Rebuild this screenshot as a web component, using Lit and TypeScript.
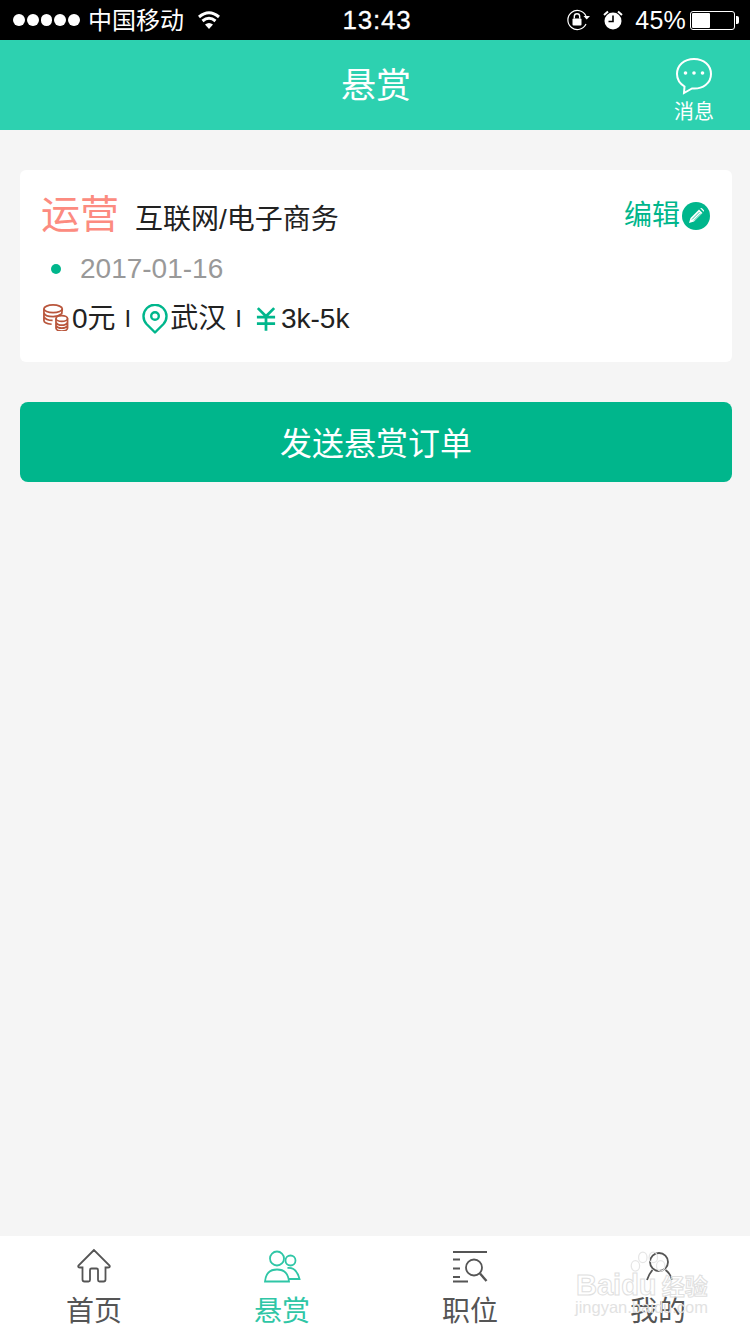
import { LitElement, css, html, svg } from "lit";
import { customElement } from "lit/decorators.js";

const tabs = [
  {
    label: "首页",
    icon: svg`<g transform="translate(1 0.500)"><path d="M18 1.500 L2.500 17 Q1.500 19 4 19 L6.500 19 L6.500 31 Q6.500 33 8.500 33 L12.500 33 Q14 33 14 31.500 L14 21.500 Q14 20 15.500 20 L20.500 20 Q22 20 22 21.500 L22 31.500 Q22 33 23.500 33 L27.500 33 Q29.500 33 29.500 31 L29.500 19 L32 19 Q34.500 19 33.500 17 Z"/></g>`,
  },
  {
    label: "悬赏",
    active: true,
    icon: svg`<circle cx="14" cy="10.500" r="7"/><path d="M2 33.500 Q3 21.500 14 21.500 Q25 21.500 26 33.500 Z"/><circle cx="27.500" cy="12.500" r="5"/><path d="M24.500 20 Q33.500 19 36.500 31 L26 31"/>`,
  },
  {
    label: "职位",
    icon: svg`<g transform="translate(0 1)"><path d="M2 3 H36 M2 10.500 H9 M2 19.500 H9 M2 28 H9 M2 32.500 H17"/><circle cx="23" cy="18.500" r="8"/><path d="M29 24.500 L35.500 32" stroke-width="2.400"/></g>`,
  },
  {
    label: "我的",
    icon: svg`<circle cx="20" cy="14" r="9"/><path d="M13.500 22 Q10 26 8 32 M26.500 22 Q31 25 33 32"/>`,
  },
];

@customElement("app-root")
export class AppRoot extends LitElement {
  static styles = css`
    :host {
      display: block;
      width: 750px;
      height: 1334px;
      background: #f5f5f5;
      font-family: "Liberation Sans", "Noto Sans CJK SC", sans-serif;
      position: relative;
      overflow: hidden;
    }
    .page {
      height: 1334px;
      display: flex;
      flex-direction: column;
    }
    .status {
      height: 40px;
      background: #000;
      color: #fff;
      display: flex;
      align-items: center;
      padding: 0 11px 0 13px;
      position: relative;
    }
    .dots {
      display: flex;
      gap: 2px;
      margin-right: 8px;
    }
    .dots i {
      width: 11.800px;
      height: 11.800px;
      border-radius: 50%;
      background: #fff;
    }
    .carrier {
      margin-right: 12px;
      font-size: 24px;
      line-height: 24px;
      margin-top: 1px;
    }
    .time {
      position: absolute;
      left: 4px;
      right: 0;
      text-align: center;
      font-size: 26px;
      letter-spacing: 0.8px;
      -webkit-text-stroke: 0.3px #fff;
    }
    .status-right {
      margin-left: auto;
      display: flex;
      align-items: center;
    }
    .pct {
      font-size: 25px;
      letter-spacing: 0.2px;
      margin: 0 4px 0 12px;
    }
    .battery {
      width: 41px;
      height: 15px;
      border: 1px solid #fff;
      border-radius: 3px;
      padding: 1px;
      display: flex;
      box-sizing: content-box;
    }
    .battery b {
      width: 18px;
      background: #fff;
      border-radius: 1px;
    }
    .nub {
      width: 3px;
      height: 8px;
      background: #fff;
      border-radius: 0 2px 2px 0;
      margin-left: 1px;
    }
    .header {
      height: 90px;
      background: #2dd1b0;
      color: #fff;
      display: flex;
      align-items: center;
      justify-content: center;
      position: relative;
    }
    .title {
      font-size: 35px;
      line-height: 1;
      margin-left: 2px;
    }
    .msg {
      position: absolute;
      right: 36px;
      top: 17px;
      display: flex;
      flex-direction: column;
      align-items: center;
      font-size: 20px;
      line-height: 20px;
      gap: 7px;
    }
    .content {
      flex: 1;
      padding: 40px 18px 0 20px;
      display: flex;
      flex-direction: column;
      gap: 40px;
    }
    .card {
      height: 192px;
      box-sizing: border-box;
      background: #fff;
      border-radius: 6px;
      padding: 20px 22px 0 21px;
      color: #222;
    }
    .row1 {
      display: flex;
      align-items: center;
      height: 50px;
    }
    .job {
      font-size: 39px;
      color: #fc8b80;
      line-height: 50px;
      margin-right: 16px;
    }
    .cat {
      font-size: 28px;
      margin-top: 4px;
    }
    .edit {
      margin-left: auto;
      display: flex;
      align-items: center;
      color: #00b68c;
      font-size: 28px;
      margin-top: -4px;
      gap: 2px;
    }
    .pen {
      width: 28px;
      height: 28px;
      margin-top: 6px;
    }
    .row2 {
      display: flex;
      align-items: center;
      height: 32px;
      margin-top: 13px;
      color: #999;
      font-size: 28px;
    }
    .dot {
      width: 10px;
      height: 10px;
      border-radius: 50%;
      background: #00b68c;
      margin: 0 19px 0 10px;
    }
    .row3 {
      display: flex;
      align-items: center;
      height: 36px;
      line-height: 36px;
      margin-top: 16px;
      font-size: 28px;
    }
    .sep {
      font-size: 24px;
      margin: 0 9px;
    }
    .send {
      height: 80px;
      box-sizing: border-box;
      padding-bottom: 3px;
      border-radius: 8px;
      background: #00b68c;
      color: #fff;
      display: flex;
      align-items: center;
      justify-content: center;
      font-size: 32px;
    }
    .tabbar {
      height: 98px;
      box-sizing: border-box;
      background: #fff;
      display: grid;
      grid-template-columns: repeat(4, 188px);
    }
    .tab {
      display: flex;
      flex-direction: column;
      align-items: center;
      color: #555;
      font-size: 28px;
      line-height: 36px;
      padding-top: 12px;
      gap: 10px;
    }
    .tab.active {
      color: #2fc6a6;
    }
    .tab svg {
      width: 38px;
      height: 36px;
      fill: none;
      stroke: currentColor;
      stroke-width: 1.800;
    }
    .watermark {
      position: absolute;
      left: 575px;
      top: 1250px;
      width: 140px;
      height: 72px;
      color: transparent;
      pointer-events: none;
    }
    .wm-main {
      position: absolute;
      left: 1px;
      top: 19px;
      font-size: 29px;
      font-weight: 700;
      line-height: 32px;
      -webkit-text-stroke: 1px #e0e0e0;
      white-space: nowrap;
    }
    .wm-cn {
      font-size: 23px;
      margin-left: -3px;
    }
    .wm-sub {
      position: absolute;
      left: 0;
      top: 48px;
      font-size: 16.500px;
      color: #e2e2e2;
      white-space: nowrap;
    }
    .paw {
      position: absolute;
      left: 52px;
      top: 1px;
      width: 40px;
      height: 36px;
      fill: none;
      stroke: #e6e6e6;
      stroke-width: 1.200;
    }
  `;

  render() {
    return html`
      <div class="page">
        <div class="status">
          <div class="dots"><i></i><i></i><i></i><i></i><i></i></div>
          <span class="carrier">中国移动</span>
          <svg width="26" height="20" viewBox="0 0 26 20">
            <path d="M13 19 L9 14.500 Q13 11.500 17 14.500 Z" fill="#fff" />
            <path d="M6.500 11 Q13 5.500 19.500 11 M3 7 Q13 -1.500 23 7" fill="none" stroke="#fff" stroke-width="3" />
          </svg>
          <span class="time">13:43</span>
          <div class="status-right">
            <svg width="24" height="22" viewBox="0 0 24 22">
              <path d="M20 15 A9.500 9.500 0 1 1 20 7" fill="none" stroke="#fff" stroke-width="1.200" />
              <path d="M17.500 7 H24 L20.700 10.500 Z" fill="#fff" />
              <rect x="6.500" y="9.500" width="9" height="7" rx="1" fill="#fff" />
              <path d="M8.300 9.500 V7.500 A2.700 2.700 0 0 1 13.700 7.500 V9.500" fill="none" stroke="#fff" stroke-width="1.400" />
            </svg>
            <svg style="margin-left:13px" width="20" height="20" viewBox="0 0 20 20">
              <circle cx="10" cy="11" r="8.500" fill="#fff" />
              <path d="M10 5.500 V11.500 H5.500" fill="none" stroke="#000" stroke-width="1.600" />
              <path d="M1 5 L5 1.500 M19 5 L15 1.500" stroke="#fff" stroke-width="2" />
            </svg>
            <span class="pct">45%</span>
            <div class="battery"><b></b></div>
            <div class="nub"></div>
          </div>
        </div>

        <div class="header">
          <span class="title">悬赏</span>
          <div class="msg">
            <svg width="38" height="38" viewBox="0 0 38 38">
              <path d="M19 2 C9 2 2 8.500 2 17 C2 23 5.500 27 9.500 29.500 L9 36 L17 31.500 C28 32.500 36 26 36 17 C36 8.500 29 2 19 2 Z" fill="none" stroke="#fff" stroke-width="2" />
              <circle cx="10.500" cy="16" r="1.800" fill="#fff" />
              <circle cx="19" cy="16" r="1.800" fill="#fff" />
              <circle cx="27.500" cy="16" r="1.800" fill="#fff" />
            </svg>
            <span>消息</span>
          </div>
        </div>

        <div class="content">
          <div class="card">
            <div class="row1">
              <span class="job">运营</span>
              <span class="cat">互联网/电子商务</span>
              <span class="edit">
                编辑
                <svg class="pen" viewBox="0 0 28 28">
                  <circle cx="14" cy="14" r="14" fill="#00b68c" />
                  <path d="M7 21 L8.500 16 L17 7.500 L20.500 11 L12 19.500 Z M18.200 6.300 Q19 5.500 20 6.300 L21.700 8 Q22.500 9 21.700 9.800 Z" fill="#fff" />
                  <path d="M10 17.500 L17.500 10 M12 18.500 L19 11.500" stroke="#00b68c" stroke-width="0.800" />
                </svg>
              </span>
            </div>
            <div class="row2"><i class="dot"></i>2017-01-16</div>
            <div class="row3">
              <svg style="margin-left:1px;margin-top:-3px" width="27" height="27" viewBox="0 0 28 28" fill="none" stroke="#b9563c" stroke-width="1.800">
                <ellipse cx="11.500" cy="5" rx="9.500" ry="4" />
                <path d="M2 5 V17 Q2 20 10 21 M2 9 Q3 13 11.500 13 Q17 13 20.500 10 L21 5 M2 13 Q4 17 11 17" />
                <ellipse cx="20.500" cy="15" rx="6" ry="3" />
                <path d="M14.500 15 V25 Q15 28 20.500 28 Q26 28 26.500 25 V15 M14.500 19 Q16 22 20.500 22 Q25 22 26.500 19 M14.500 22.500 Q16 25 20.500 25 Q25 25 26.500 22.500" />
              </svg>
              <span style="margin-left:3px">0元</span>
              <span class="sep">I</span>
              <svg style="margin-left:2px" width="26" height="30" viewBox="0 0 26 30" fill="none" stroke="#00b68c" stroke-width="2.400">
                <path d="M13 28.500 L4.500 20 A11.500 11.500 0 1 1 21.500 20 Z" stroke-linejoin="round" />
                <circle cx="13" cy="12" r="3.800" />
              </svg>
              <span style="margin-left:2px">武汉</span>
              <span class="sep">I</span>
              <svg style="margin-left:5px" width="20" height="26" viewBox="0 0 22 26" fill="none" stroke="#00b68c" stroke-width="3">
                <path d="M2 1 L11 10 L20 1 M11 10 V26 M1 11 H21 M1 18 H21" />
              </svg>
              <span style="margin-left:5px">3k-5k</span>
            </div>
          </div>
          <div class="send">发送悬赏订单</div>
        </div>

        <div class="tabbar">
          ${tabs.map(
            (t) => html`
              <div class="tab ${t.active ? "active" : ""}">
                <svg viewBox="0 0 38 36">${t.icon}</svg>
                <span>${t.label}</span>
              </div>
            `
          )}
        </div>
      </div>

      <div class="watermark">
        <svg class="paw" viewBox="0 0 38 34">
          <ellipse cx="8" cy="14" rx="4" ry="5" />
          <ellipse cx="15" cy="6" rx="4" ry="5" />
          <ellipse cx="25" cy="6" rx="4" ry="5" />
          <ellipse cx="32" cy="14" rx="4" ry="5" />
        </svg>
        <div class="wm-main">Baidu <span class="wm-cn">经验</span></div>
        <div class="wm-sub">jingyan.baidu.com</div>
      </div>
    `;
  }
}
